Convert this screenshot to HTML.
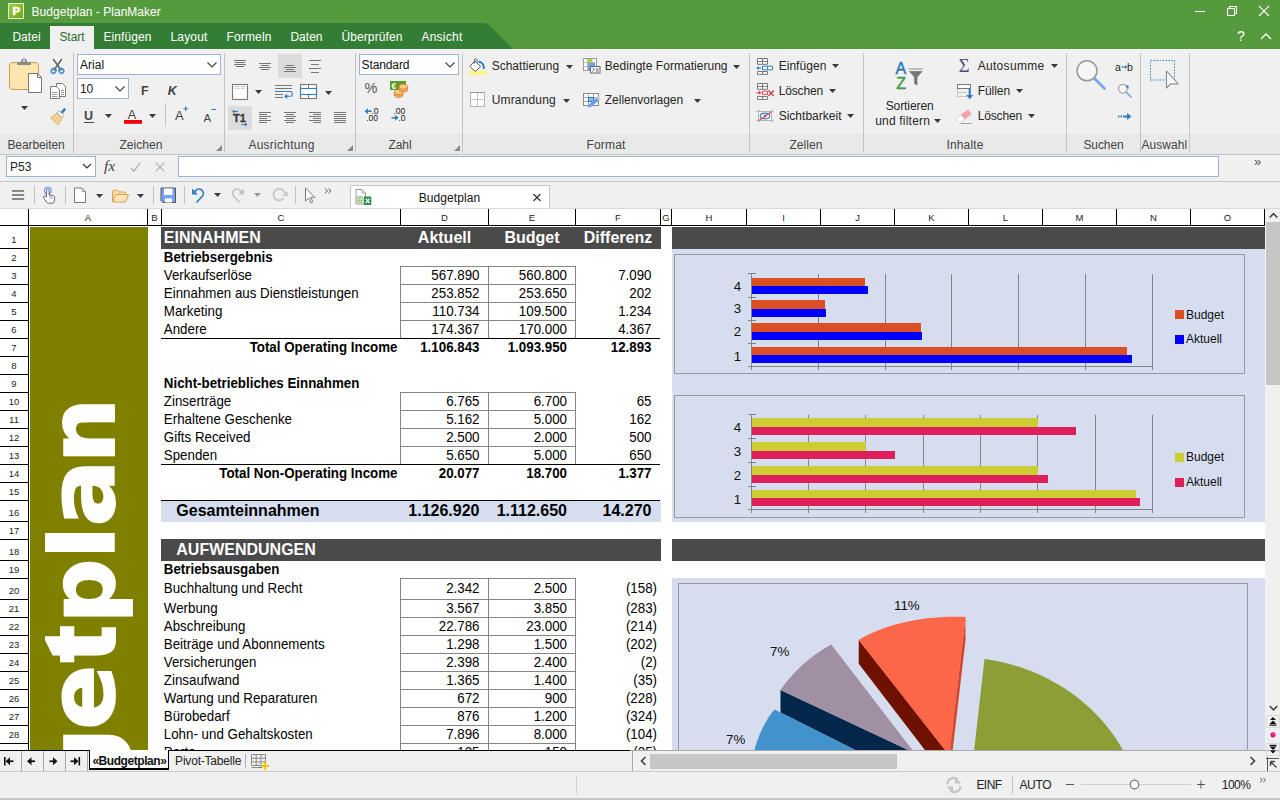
<!DOCTYPE html>
<html lang="de"><head><meta charset="utf-8"><title>Budgetplan - PlanMaker</title>
<style>
*{box-sizing:border-box;margin:0;padding:0}
html,body{width:1280px;height:800px;overflow:hidden;background:#f0f0f0}
body{font-family:"Liberation Sans",sans-serif;font-size:12px;color:#222;position:relative}
.a{position:absolute}
.t{position:absolute;white-space:nowrap;line-height:1}
#title{left:0;top:0;width:1280px;height:49px;background:#569a3e}
#ribbon{left:0;top:49px;width:1280px;height:105px;background:#f0f0f0}
#riblab{left:0;top:134px;width:1280px;height:20px;background:#e9e9e9}
.sep{position:absolute;width:1px;background:#c4c4c4;top:53px;height:100px}
.ui{position:absolute;white-space:nowrap;line-height:14px;height:14px;font-size:12px;color:#222}
.lab{position:absolute;white-space:nowrap;line-height:14px;height:14px;font-size:12px;color:#444;text-align:center}
.menu{position:absolute;white-space:nowrap;line-height:14px;font-size:12px;color:#fff;top:30px}
.combo{position:absolute;background:#fff;border:1px solid #9db3d6}
.arr{position:absolute;width:0;height:0;border-left:3.5px solid transparent;border-right:3.5px solid transparent;border-top:4px solid #333}
#sheet{left:0;top:209px;width:1265px;height:541px;background:#fff;overflow:hidden}
.ch{position:absolute;top:0;height:16px;line-height:17px;font-size:9.5px;text-align:center;color:#222;border-right:1px solid #000}
.rh{position:absolute;left:0;width:29px;border-right:1px solid #000;border-bottom:1px solid #000;font-size:9.5px;text-align:center;color:#222}
.c{position:absolute;white-space:nowrap;font-size:13.33px;line-height:15px;height:15px;color:#000}
.b{font-weight:bold}
.r{text-align:right}
.cell{position:absolute;border:1px solid #868686}
</style></head>
<body>
<div class="a" id="title"></div>
<svg class="a" style="left:0;top:23px" width="520" height="26"><path d="M0 0H483Q487.500 0 490.500 3L513 26H0Z" fill="#347d34"/></svg>
<div class="a" style="left:50px;top:26px;width:44px;height:23px;background:#f0f0f0"></div>
<div class="a" style="left:8px;top:3px;width:16px;height:16px;background:linear-gradient(135deg,#9cd33c,#6ea41d);border:1px solid #e6efc6"></div><div class="t" style="left:12.6px;top:5.5px;font-size:11.5px;font-weight:bold;color:#fff;-webkit-text-stroke:.5px #fff">P</div>
<div class="t" style="left:31.6px;top:5.5px;font-size:12px;color:#fff;letter-spacing:0.020px">Budgetplan - PlanMaker</div>
<div class="menu" style="left:12.4px;color:#fff;letter-spacing:0.037px">Datei</div>
<div class="menu" style="left:59.4px;color:#2c6e2c;letter-spacing:-0.029px">Start</div>
<div class="menu" style="left:103.4px;color:#fff;letter-spacing:0.103px">Einfügen</div>
<div class="menu" style="left:170.4px;color:#fff;letter-spacing:0.195px">Layout</div>
<div class="menu" style="left:226.4px;color:#fff;letter-spacing:0.169px">Formeln</div>
<div class="menu" style="left:290.4px;color:#fff;letter-spacing:0.034px">Daten</div>
<div class="menu" style="left:341.4px;color:#fff;letter-spacing:0.115px">Überprüfen</div>
<div class="menu" style="left:421.4px;color:#fff;letter-spacing:0.263px">Ansicht</div>
<svg class="a" style="left:1180px;top:0" width="100" height="49" fill="none" stroke="#fff" stroke-width="1.1"><path d="M15 11.5h10"/><rect x="47.5" y="8.5" width="7" height="7"/><path d="M49.5 8.5v-2h7v7h-2"/><path d="M79 6l10 10M89 6l-10 10"/><path d="M81 39l5-5l5 5" stroke-width="1.3"/></svg>
<div class="t" style="left:1237px;top:29px;font-size:14px;color:#fff">?</div>
<div class="a" id="ribbon"></div><div class="a" id="riblab"></div>
<div class="a" style="left:0;top:154px;width:1280px;height:1px;background:#c2c2c2"></div>
<div class="sep" style="left:73px"></div><div class="sep" style="left:224px"></div><div class="sep" style="left:355px"></div><div class="sep" style="left:462px"></div><div class="sep" style="left:749px"></div><div class="sep" style="left:863px"></div><div class="sep" style="left:1066px"></div><div class="sep" style="left:1140px"></div><div class="sep" style="left:1189px"></div>
<div class="lab" style="left:7.4px;top:138px;text-align:left;letter-spacing:-0.085px">Bearbeiten</div><div class="lab" style="left:119.4px;top:138px;text-align:left;letter-spacing:0.071px">Zeichen</div><div class="lab" style="left:248.4px;top:138px;text-align:left;letter-spacing:0.257px">Ausrichtung</div><div class="lab" style="left:388.4px;top:138px;text-align:left;letter-spacing:-0.036px">Zahl</div><div class="lab" style="left:586.4px;top:138px;text-align:left;letter-spacing:0.197px">Format</div><div class="lab" style="left:789.4px;top:138px;text-align:left;letter-spacing:0.085px">Zellen</div><div class="lab" style="left:946.4px;top:138px;text-align:left;letter-spacing:0.167px">Inhalte</div><div class="lab" style="left:1083.4px;top:138px;text-align:left;letter-spacing:-0.084px">Suchen</div><div class="lab" style="left:1141.4px;top:138px;text-align:left;letter-spacing:0.049px">Auswahl</div>
<div class="a" style="left:278px;top:54px;width:24px;height:24px;background:#dcdcdc"></div><div class="a" style="left:228px;top:106px;width:24px;height:24px;background:#dcdcdc"></div>
<div class="combo" style="left:77px;top:54px;width:144px;height:21px"></div><div class="combo" style="left:77px;top:78px;width:52px;height:21px"></div><div class="combo" style="left:359px;top:54px;width:100px;height:21px"></div>
<div class="ui" style="left:79.90px;top:58.00px;font-size:12px;color:#111;letter-spacing:0.037px;">Arial</div><div class="ui" style="left:79.90px;top:82.00px;font-size:12px;color:#111;letter-spacing:-0.080px;">10</div><div class="ui" style="left:361.60px;top:58.00px;font-size:12px;color:#111;letter-spacing:-0.125px;">Standard</div><div class="ui" style="left:140.90px;top:84.00px;font-size:12.5px;color:#444;letter-spacing:-0.141px;font-weight:bold;">F</div><div class="ui" style="left:167.80px;top:84.00px;font-size:12.5px;color:#444;letter-spacing:1.569px;font-weight:bold;font-style:italic;">K</div><div class="ui" style="left:84.00px;top:109.00px;font-size:12.5px;color:#444;letter-spacing:0.969px;font-weight:bold;text-decoration:underline;text-underline-offset:1.5px;">U</div><div class="ui" style="left:127.80px;top:108.00px;font-size:12.5px;color:#444;letter-spacing:2.256px;">A</div><div class="ui" style="left:174.90px;top:109.00px;font-size:13px;color:#444;letter-spacing:1.628px;">A</div><div class="ui" style="left:203.40px;top:111.00px;font-size:11.5px;color:#444;letter-spacing:1.528px;">A</div><div class="ui" style="left:364.40px;top:81.00px;font-size:14.5px;color:#555;letter-spacing:0.094px;">%</div><div class="ui" style="left:491.65px;top:59.00px;font-size:12px;color:#262626;letter-spacing:0.013px;">Schattierung</div><div class="ui" style="left:604.80px;top:59.00px;font-size:12px;color:#262626;letter-spacing:0.034px;">Bedingte Formatierung</div><div class="ui" style="left:491.65px;top:93.00px;font-size:12px;color:#262626;letter-spacing:0.172px;">Umrandung</div><div class="ui" style="left:604.80px;top:93.00px;font-size:12px;color:#262626;letter-spacing:-0.030px;">Zellenvorlagen</div><div class="ui" style="left:778.65px;top:59.00px;font-size:12px;color:#262626;letter-spacing:0.041px;">Einfügen</div><div class="ui" style="left:778.65px;top:84.00px;font-size:12px;color:#262626;letter-spacing:-0.132px;">Löschen</div><div class="ui" style="left:778.65px;top:109.00px;font-size:12px;color:#262626;letter-spacing:0.021px;">Sichtbarkeit</div><div class="ui" style="left:885.65px;top:99.00px;font-size:12px;color:#262626;letter-spacing:-0.084px;">Sortieren</div><div class="ui" style="left:875.15px;top:114.00px;font-size:12px;color:#262626;letter-spacing:0.204px;">und filtern</div><div class="ui" style="left:977.65px;top:59.00px;font-size:12px;color:#262626;letter-spacing:0.324px;">Autosumme</div><div class="ui" style="left:977.65px;top:84.00px;font-size:12px;color:#262626;letter-spacing:-0.040px;">Füllen</div><div class="ui" style="left:977.65px;top:109.00px;font-size:12px;color:#262626;letter-spacing:-0.132px;">Löschen</div><div class="ui" style="left:1114.90px;top:60.00px;font-size:10.5px;color:#262626;letter-spacing:0.856px;">a</div><div class="ui" style="left:1126.90px;top:60.00px;font-size:10.5px;color:#262626;letter-spacing:0.856px;">b</div>
<svg class="a" style="left:21.3px;top:105.8px" width="7" height="4"><path d="M0 0H7L3.5 4Z" fill="#3a3a3a"/></svg><svg class="a" style="left:105px;top:114px" width="7" height="4"><path d="M0 0H7L3.5 4Z" fill="#3a3a3a"/></svg><svg class="a" style="left:149px;top:114px" width="7" height="4"><path d="M0 0H7L3.5 4Z" fill="#3a3a3a"/></svg><svg class="a" style="left:255px;top:90.3px" width="7" height="4"><path d="M0 0H7L3.5 4Z" fill="#3a3a3a"/></svg><svg class="a" style="left:325px;top:90.5px" width="7" height="4"><path d="M0 0H7L3.5 4Z" fill="#3a3a3a"/></svg><svg class="a" style="left:566px;top:64.9px" width="7" height="4"><path d="M0 0H7L3.5 4Z" fill="#3a3a3a"/></svg><svg class="a" style="left:732.5px;top:64.9px" width="7" height="4"><path d="M0 0H7L3.5 4Z" fill="#3a3a3a"/></svg><svg class="a" style="left:563px;top:99.2px" width="7" height="4"><path d="M0 0H7L3.5 4Z" fill="#3a3a3a"/></svg><svg class="a" style="left:693.5px;top:99.2px" width="7" height="4"><path d="M0 0H7L3.5 4Z" fill="#3a3a3a"/></svg><svg class="a" style="left:832px;top:64px" width="7" height="4"><path d="M0 0H7L3.5 4Z" fill="#3a3a3a"/></svg><svg class="a" style="left:829px;top:89px" width="7" height="4"><path d="M0 0H7L3.5 4Z" fill="#3a3a3a"/></svg><svg class="a" style="left:847px;top:114px" width="7" height="4"><path d="M0 0H7L3.5 4Z" fill="#3a3a3a"/></svg><svg class="a" style="left:934px;top:119.3px" width="7" height="4"><path d="M0 0H7L3.5 4Z" fill="#3a3a3a"/></svg><svg class="a" style="left:1051px;top:64px" width="7" height="4"><path d="M0 0H7L3.5 4Z" fill="#3a3a3a"/></svg><svg class="a" style="left:1016px;top:89px" width="7" height="4"><path d="M0 0H7L3.5 4Z" fill="#3a3a3a"/></svg><svg class="a" style="left:1027.5px;top:114px" width="7" height="4"><path d="M0 0H7L3.5 4Z" fill="#3a3a3a"/></svg>
<svg class="a" style="left:0;top:49px" width="1280" height="105" viewBox="0 49 1280 105" fill="none">
<g stroke="#444" stroke-width="1.2"><path d="M207.5 62.5l4.5 4.5l4.5-4.5"/><path d="M115.5 86.5l4.5 4.5l4.5-4.5"/><path d="M445.5 62.5l4.5 4.5l4.5-4.5"/></g>
<rect x="9.5" y="62.5" width="29" height="27" rx="3.5" fill="#ffe5b0" stroke="#d39a52"/><path d="M17 65v-1.5a1.5 1.5 0 0 1 1.5-1.5h3a2.6 2.6 0 0 1 5 0h3a1.5 1.5 0 0 1 1.5 1.5v1.5z" fill="#8a8a8a"/><circle cx="24" cy="61.300" r="2.900" fill="#8a8a8a"/><circle cx="24" cy="60.700" r="1.100" fill="#f0f0f0"/><path d="M28.5 73.5h9l4 4v15h-13z" fill="#fff" stroke="#777"/><path d="M37.5 73.5v4h4" stroke="#777"/>
<g stroke="#666" stroke-width="1.6" stroke-linecap="round"><path d="M53.5 59.5l7.5 10.5"/><path d="M61.5 59.5l-7.500 10.500"/></g><g stroke="#3c87c5" stroke-width="1.5"><ellipse cx="53.6" cy="70.8" rx="2.2" ry="2.6" transform="rotate(35 53.6 70.8)"/><ellipse cx="61.4" cy="70.8" rx="2.2" ry="2.6" transform="rotate(-35 61.4 70.8)"/></g>
<g stroke="#777" fill="#fff"><path d="M56.500 83.500h6l3 3v10h-9z"/><path d="M50.500 86.500h6l3 3v9h-9z"/></g><g stroke="#999"><path d="M52 92.500h5.500M52 94.500h5.500M52 96.500h5.500M61 90.500h3M61 92.500h3M61 94.500h3"/></g>
<g transform="translate(1.2 .8) rotate(40 57 116)"><rect x="55.8" y="105" width="2.6" height="6.500" rx="1" fill="#3b7fb5"/><rect x="53.5" y="111" width="7.200" height="3" fill="#fff" stroke="#999" stroke-width=".8"/><path d="M53.300 114.500h7.600l1.200 7.600h-10z" fill="#f6d79a" stroke="#d9a85c" stroke-width=".8"/><path d="M54.500 116v5M57 116v5.500M59.500 116v5" stroke="#e6bd7a" stroke-width=".6"/></g>
<rect x="165" y="103" width="1" height="23" fill="#c4c4c4"/><rect x="124" y="120" width="18" height="3.800" fill="#f00000"/><g stroke="#2f7fc1" stroke-width="1.1"><path d="M183.500 108.700h4.400M185.700 106.500v4.400"/><path d="M211.500 109.500h4.400"/></g>
<path d="M222 145v6h-6z" fill="#8a8a8a"/><path d="M353 145v6h-6z" fill="#8a8a8a"/><path d="M460 145v6h-6z" fill="#8a8a8a"/>
<rect x="234" y="60" width="12" height="1" fill="#777"/><rect x="235" y="62" width="10" height="1" fill="#777"/><rect x="234" y="64" width="12" height="1" fill="#777"/><rect x="236" y="66" width="8" height="1" fill="#777"/><rect x="259" y="63" width="12" height="1" fill="#777"/><rect x="261" y="65" width="8" height="1" fill="#777"/><rect x="259" y="67" width="12" height="1" fill="#777"/><rect x="261" y="69" width="8" height="1" fill="#777"/><rect x="286" y="65" width="8" height="1" fill="#777"/><rect x="284" y="67" width="12" height="1" fill="#777"/><rect x="286" y="69" width="8" height="1" fill="#777"/><rect x="284" y="71" width="12" height="1" fill="#777"/><rect x="309" y="60" width="12" height="1" fill="#777"/><rect x="311" y="64" width="8" height="1" fill="#777"/><rect x="309" y="68" width="12" height="1" fill="#777"/><rect x="311" y="72" width="8" height="1" fill="#777"/><rect x="259" y="112" width="12" height="1" fill="#777"/><rect x="284" y="112" width="12" height="1" fill="#777"/><rect x="309" y="112" width="12" height="1" fill="#777"/><rect x="334" y="112" width="12" height="1" fill="#777"/><rect x="259" y="114" width="8" height="1" fill="#777"/><rect x="286" y="114" width="8" height="1" fill="#777"/><rect x="313" y="114" width="8" height="1" fill="#777"/><rect x="334" y="114" width="12" height="1" fill="#777"/><rect x="259" y="116" width="12" height="1" fill="#777"/><rect x="284" y="116" width="12" height="1" fill="#777"/><rect x="309" y="116" width="12" height="1" fill="#777"/><rect x="334" y="116" width="12" height="1" fill="#777"/><rect x="259" y="118" width="8" height="1" fill="#777"/><rect x="286" y="118" width="8" height="1" fill="#777"/><rect x="313" y="118" width="8" height="1" fill="#777"/><rect x="334" y="118" width="12" height="1" fill="#777"/><rect x="259" y="120" width="12" height="1" fill="#777"/><rect x="284" y="120" width="12" height="1" fill="#777"/><rect x="309" y="120" width="12" height="1" fill="#777"/><rect x="334" y="120" width="12" height="1" fill="#777"/><rect x="259" y="122" width="8" height="1" fill="#777"/><rect x="286" y="122" width="8" height="1" fill="#777"/><rect x="313" y="122" width="8" height="1" fill="#777"/><rect x="334" y="122" width="12" height="1" fill="#777"/><rect x="232.500" y="84.500" width="15" height="15" fill="#fff" stroke="#777" stroke-width="1.100"/><path d="M234.500 86.500h5M241 86.500h4.500M234.500 88.500h2M237.500 88.500h2M241 88.500h3.500" stroke="#c8c8c8"/>
<g stroke="#777"><path d="M275 85.500h17M275 88.500h17M275 94.500h8M275 97.500h8"/></g><path d="M275 91.500h15.500a1.800 1.800 0 0 1 1.800 1.800v1.200a1.800 1.800 0 0 1-1.800 1.800h-4" stroke="#2f7fc1" stroke-width="1.100"/><path d="M284 96.300l3.200-2.600v5.200z" fill="#2f7fc1"/>
<rect x="300.500" y="84.500" width="16" height="14" fill="#fff" stroke="#777" stroke-width="1.100"/><path d="M308.500 84.500v14" stroke="#777"/><rect x="300.500" y="88.500" width="16" height="6" fill="#fff" stroke="#2f7fc1" stroke-width="1.100"/>
<g stroke="#2f7fc1" stroke-width="1.100"><path d="M233 111.500h5"/><path d="M241.500 124.500h5"/></g><path d="M232 111.500l2.500-2v4z" fill="#2f7fc1"/><path d="M247.500 124.500l-2.500-2v4z" fill="#2f7fc1"/>
<rect x="390" y="81" width="16" height="9" fill="#5a9c2a"/><ellipse cx="398.6" cy="95" rx="4.300" ry="2.400" fill="#f8c987" stroke="#d8802a" stroke-width=".9"/><ellipse cx="398.6" cy="93.5" rx="4.300" ry="2.400" fill="#f8c987" stroke="#d8802a" stroke-width=".9"/><ellipse cx="398.6" cy="92" rx="4.300" ry="2.400" fill="#f8c987" stroke="#d8802a" stroke-width=".9"/><ellipse cx="403.4" cy="89.6" rx="4.300" ry="2.400" fill="#f8c987" stroke="#d8802a" stroke-width=".9"/><ellipse cx="403.4" cy="88.1" rx="4.300" ry="2.400" fill="#f8c987" stroke="#d8802a" stroke-width=".9"/><ellipse cx="403.4" cy="86.6" rx="4.300" ry="2.400" fill="#f8c987" stroke="#d8802a" stroke-width=".9"/><g stroke="#2f7fc1" stroke-width="1.600"><path d="M366 111.200h5.500"/><path d="M391.500 117.800h5.500"/></g><path d="M364.500 111.200l3.500-3v6z" fill="#2f7fc1"/><path d="M398.600 117.800l-3.500-3v6z" fill="#2f7fc1"/>
<rect x="469" y="71" width="18" height="3.800" fill="#fff580"/><path d="M475 61l5.500 5.500l-4.500 4.500a1 1 0 0 1-1.400 0l-4.100-4.100a1 1 0 0 1 0-1.400z" fill="#fff" stroke="#555"/><path d="M474.300 63.800v-3.600a1.400 1.400 0 0 1 2.800 0v2" stroke="#555" stroke-width=".9"/><path d="M478.500 61.800c3.800.3 5.800 3.200 5.300 7.200" stroke="#2f7fc1" stroke-width="2"/>
<rect x="583.500" y="58.500" width="13" height="12" fill="#fff" stroke="#999"/><path d="M587.500 58.500v12M592 58.500v12M583.500 62.500h13M583.500 66.500h13" stroke="#bbb"/><rect x="588" y="59" width="4" height="3.500" fill="#b5d334"/><rect x="588" y="63" width="7" height="3.500" fill="#6d9eeb"/><rect x="588" y="67" width="3" height="3.500" fill="#6d9eeb"/><rect x="590.500" y="66.500" width="9.500" height="6.500" fill="#fff" stroke="#666"/><path d="M592.500 68l2 1.700l-2 1.700M596 69h2.500M596 71h2.500" stroke="#444" stroke-width=".9"/>
<rect x="470.500" y="92.500" width="14" height="14" fill="#fff" stroke="#b4b4b4"/><path d="M477.500 92.500v14M470.500 99.500h14" stroke="#c4c4c4"/><path d="M470 92.500h15" stroke="#999"/>
<rect x="583.500" y="93.500" width="15" height="12" fill="#fff" stroke="#888"/><path d="M588.500 93.500v12M593.500 93.500v12M583.500 97.500h15M583.500 101.500h15" stroke="#aaa"/><rect x="588.500" y="97.500" width="5" height="4" fill="#9db7f0" stroke="#2f7fc1"/><path d="M587.500 108l2-4l7-6.500l2.500 2.500l-7 6.500z" fill="#6d9eeb"/><path d="M596 98l2-2l2.500 2.500l-2 2z" fill="#ccc"/>
<path d="M757.500 58.5h10v5.8h-10zM762.500 58.5v5.8M757.500 61.4h10" stroke="#777" fill="#fff" stroke-width="1"/><path d="M757.500 71.5h10v2.9h-10zM762.500 71.5v2.9" stroke="#777" fill="#fff" stroke-width="1"/><path d="M762.500 66.200h10v3.600h-10zM767.500 66.200v3.600" fill="#fff" stroke="#2f7fc1"/><path d="M758 68h3.500" stroke="#2f7fc1"/><path d="M756.200 68l2.600-2v4z" fill="#2f7fc1"/>
<path d="M757.500 83.5h10v5.8h-10zM762.500 83.5v5.8M757.500 86.4h10" stroke="#777" fill="#fff" stroke-width="1"/><path d="M757.500 96.5h10v2.9h-10zM762.500 96.5v2.9" stroke="#777" fill="#fff" stroke-width="1"/><path d="M756.500 92.800h3" stroke="#d9333f"/><path d="M761.500 92.800l-2.600-2v4z" fill="#d9333f"/><path d="M762.500 91.200h5v3.200h-5z" fill="#fff" stroke="#d9333f" stroke-width=".9"/><path d="M768.500 90.500l5.300 5.500M773.800 90.500l-5.300 5.500" stroke="#d9333f" stroke-width="1.200"/>
<rect x="758.500" y="111.500" width="13" height="9" fill="#fff" stroke="none"/><path d="M756.500 111.500h17M756.500 120.500h17M758.500 109.500v13M771.500 109.500v13" stroke="#b4b4b4"/><ellipse cx="765" cy="116" rx="4.800" ry="2.900" stroke="#3b7fb5" stroke-width="1.100"/><circle cx="765" cy="116" r="1.400" fill="#3b7fb5"/><path d="M759 120.500l12-8.500" stroke="#e0404a" stroke-width="1.100"/>
<path d="M908.500 69h14.500M909.500 71.500h12.500l-5 5.500v8l-2.500-1.500v-6.500z" fill="#777" stroke="#777" stroke-width=".8"/>
<path d="M957.500 92.500h9.500M957.500 96.500h9.500M957.500 88.500v8M970.500 88.500v1" stroke="#c9c9c9"/><rect x="957.500" y="84.500" width="13" height="4" fill="#fff" stroke="#777"/><path d="M969.700 89v7" stroke="#2f7fc1" stroke-width="2.200"/><path d="M966 95h7.400l-3.700 4.200z" fill="#2f7fc1"/>
<g transform="rotate(-37 963.700 116.300)"><rect x="956" y="113.300" width="15.500" height="6.200" rx="1.200" fill="#f5a3aa" stroke="#d9d9d9" stroke-width=".7"/><path d="M957.200 113.300h5.300v6.200h-5.300a1.200 1.200 0 0 1-1.200-1.200v-3.800a1.200 1.200 0 0 1 1.200-1.200z" fill="#fff" stroke="#cfcfcf" stroke-width=".7"/></g><path d="M960.500 123.500h11" stroke="#a0a0a0"/>
<path d="M1094.500 78.500l10 10" stroke="#7aa0f0" stroke-width="2.600" stroke-linecap="round"/><circle cx="1087" cy="70.800" r="10" fill="#f6f6f6" stroke="#9a9a9a" stroke-width="1.500"/><path d="M1121.500 67h4.500" stroke="#2f7fc1" stroke-width="1.100"/><path d="M1127.500 67l-2.500-2v4z" fill="#2f7fc1"/><path d="M1126 92l5 5" stroke="#7aa0f0" stroke-width="1.600" stroke-linecap="round"/><circle cx="1122.800" cy="88.800" r="4.300" fill="#f6f6f6" stroke="#999" stroke-width="1.100"/><path d="M1125 85.500l3.500 3.500v-3.500z" fill="#2f7fc1"/><path d="M1118 116.500h1.500M1120.500 116.500h1.500M1123 116.500h4.500" stroke="#2f7fc1" stroke-width="2"/><path d="M1131.500 116.500l-4.500-3.500v7z" fill="#2f7fc1"/>
<rect x="1150.500" y="60.500" width="24" height="19.500" stroke="#2f7fc1" stroke-dasharray="1.500 1.500" fill="none"/><path d="M1166.500 71v17l4-4.200l7.800.2z" fill="#fff" stroke="#888" stroke-width="1.100" stroke-linejoin="round"/>
</svg>
<svg class="a" style="left:0;top:49px" width="1280" height="105" viewBox="0 49 1280 105" font-family="Liberation Sans,sans-serif"><text x="391.500" y="88.700" font-size="8.500" font-weight="bold" fill="#fff">€</text><g font-size="8.500" fill="#1a1a1a"><text x="371.500" y="113.700">.0</text><text x="366.200" y="120.700">.00</text><text x="393.300" y="113.700">.00</text><text x="398.400" y="120.700">.0</text></g><text x="233" y="121.700" font-size="11" font-weight="700" fill="#3c3c3c" stroke="#3c3c3c" stroke-width=".35">T1</text><text x="895.600" y="73.600" font-size="16" fill="#2e75b6" stroke="#2e75b6" stroke-width=".45">A</text><text x="896.200" y="88.800" font-size="16" fill="#3d9a45" stroke="#3d9a45" stroke-width=".45">Z</text><text x="958.800" y="71.700" font-size="18.500" font-family="Liberation Serif,serif" fill="#524a7a">Σ</text></svg>

<div class="combo" style="left:6px;top:156px;width:90px;height:21px"></div><div class="ui" style="left:10px;top:160px">P53</div>
<svg class="a" style="left:82px;top:163px" width="10" height="7" fill="none" stroke="#333" stroke-width="1.2"><path d="M1 1l4 4l4-4"/></svg>
<div class="t" style="left:104px;top:158px;font-family:'Liberation Serif',serif;font-style:italic;font-size:15.5px;color:#444">fx</div>
<svg class="a" style="left:128px;top:160px" width="40" height="14" fill="none" stroke="#b8b8b8" stroke-width="1.5"><path d="M3 8l3 3l6-8"/><path d="M28 3l8 8M36 3l-8 8" stroke-width="1.2"/></svg>
<div class="combo" style="left:178px;top:156px;width:1041px;height:21px"></div>
<div class="t" style="left:1254px;top:155px;font-size:13px;color:#555">»</div>
<div class="a" style="left:0;top:181px;width:1280px;height:1px;background:#c6c6c6"></div>
<svg class="a" style="left:0;top:182px" width="560" height="27" viewBox="0 182 560 27" fill="none">
<path d="M12 191h12.200M12 195h12.200M12 199h12.200" stroke="#666" stroke-width="1.700"/><rect x="34" y="186" width="1" height="18" fill="#c2c2c2"/><rect x="65" y="186" width="1" height="18" fill="#c2c2c2"/><rect x="153" y="186" width="1" height="18" fill="#c2c2c2"/><rect x="184" y="186" width="1" height="18" fill="#c2c2c2"/><rect x="295" y="186" width="1" height="18" fill="#c2c2c2"/><circle cx="47.800" cy="190.800" r="3.300" stroke="#7aa0f0" stroke-width="1.300"/><path d="M46.500 197v-6.300a1.300 1.300 0 0 1 2.600 0v4.300l4.300.8a1.800 1.800 0 0 1 1.400 2l-.6 3.700a2 2 0 0 1-2 1.700h-3.700a2 2 0 0 1-1.600-.8l-3.400-4.600a1.200 1.200 0 0 1 1.800-1.500z" fill="#fff" stroke="#666" stroke-width="1"/><path d="M50 196v3M52 196.500v2.500" stroke="#888" stroke-width=".8"/>
<path d="M74.500 188h7.500l3.500 3.500v11h-11z" fill="#fff" stroke="#777"/><path d="M82 188v3.500h3.500" stroke="#999"/><path d="M112.500 201.500v-10.200a1 1 0 0 1 1-1h4l1.500 1.700h5.500a1 1 0 0 1 1 1v2" fill="#ffe0a8" stroke="#d9a050"/><path d="M112.500 202l3-7.500h13l-3 7.500z" fill="#ffe6b8" stroke="#d9a050" stroke-linejoin="round"/>
<path d="M96 194h7l-3.500 4z" fill="#3a3a3a"/><path d="M137 194h7l-3.500 4z" fill="#3a3a3a"/><path d="M214 193h7l-3.500 4z" fill="#3a3a3a"/><path d="M254 193h7l-3.500 4z" fill="#9a9a9a"/><path d="M161 188h14.500v14.500h-12.500l-2-2z" fill="#7aa0f0" stroke="#555" stroke-width="1"/><rect x="164" y="188.500" width="8.500" height="6.500" fill="#fff"/><rect x="165" y="198.500" width="7" height="4" fill="#fff"/>
<path d="M196.500 202.500l6-6.500a4.300 4.300 0 0 0-6.500-5.600l-1.500 1.500" stroke="#2f7fc1" stroke-width="1.700"/><path d="M192 188.500v6h6z" fill="#2f7fc1"/><path d="M239.500 202.500l-6-6.500a4.300 4.300 0 0 1 6.500-5.600l1.500 1.500" stroke="#c2c2c2" stroke-width="1.700"/><path d="M244 188.500v6h-6z" fill="#c2c2c2"/><path d="M283.500 198.500a5.800 5.800 0 1 1 1.300-5.500" stroke="#c4c4c4" stroke-width="1.700"/><path d="M287.500 191v5h-5.500z" fill="#c4c4c4"/>
<path d="M305.500 188v13l3.200-3l2.200 4.800l1.900-.9l-2.200-4.600h4.200z" fill="#fff" stroke="#777" stroke-width="1" stroke-linejoin="round"/><path d="M325 188.500l2.500 2.300l-2.500 2.300M328.500 188.500l2.500 2.300l-2.500 2.300" stroke="#555" stroke-width="1"/>
<path d="M350.500 208.500v-23h199v23" fill="#fff" stroke="#c6c6c6"/><path d="M356 189.500h6l3.500 3.500v11h-9.500z" fill="#fff" stroke="#999"/><path d="M362 189.500v3.500h3.500" stroke="#aaa"/><path d="M357.500 196.500h5.500v6h-5.500zM359.300 196.500v6M361.100 196.500v6M357.500 198.500h5.500M357.500 200.500h5.500" stroke="#7dbb6e" stroke-width=".7"/><rect x="364" y="196.500" width="7.300" height="8.500" fill="#2f8f4a"/><path d="M365.800 198.700l3.700 4.300M369.500 198.700l-3.700 4.300" stroke="#fff" stroke-width="1.200"/><path d="M533.500 194l7 7M540.500 194l-7 7" stroke="#333" stroke-width="1.200"/>
</svg>
<div class="ui" style="left:418.800px;top:191px;color:#111;letter-spacing:0.067px">Budgetplan</div>

<div class="a" style="left:0;top:208px;width:1280px;height:1px;background:#d8d8d8"></div>
<div class="a" id="sheet">
<div class="ch" style="left:0px;width:29px"></div><div class="ch" style="left:29px;width:119px">A</div><div class="ch" style="left:148px;width:14px">B</div><div class="ch" style="left:162px;width:239px">C</div><div class="ch" style="left:401px;width:88px">D</div><div class="ch" style="left:489px;width:87px">E</div><div class="ch" style="left:576px;width:85px">F</div><div class="ch" style="left:661px;width:11px">G</div><div class="ch" style="left:672px;width:75px">H</div><div class="ch" style="left:747px;width:74px">I</div><div class="ch" style="left:821px;width:74px">J</div><div class="ch" style="left:895px;width:74px">K</div><div class="ch" style="left:969px;width:74px">L</div><div class="ch" style="left:1043px;width:74px">M</div><div class="ch" style="left:1117px;width:74px">N</div><div class="ch" style="left:1191px;width:74px">O</div>
<div class="a" style="left:0;top:16px;width:1265px;height:1px;background:#000"></div>
<div class="rh" style="top:17px;height:23px;line-height:28px">1</div><div class="rh" style="top:40px;height:18px;line-height:18px">2</div><div class="rh" style="top:58px;height:18px;line-height:18px">3</div><div class="rh" style="top:76px;height:18px;line-height:18px">4</div><div class="rh" style="top:94px;height:18px;line-height:18px">5</div><div class="rh" style="top:112px;height:18px;line-height:18px">6</div><div class="rh" style="top:130px;height:18px;line-height:18px">7</div><div class="rh" style="top:148px;height:18px;line-height:18px">8</div><div class="rh" style="top:166px;height:18px;line-height:18px">9</div><div class="rh" style="top:184px;height:18px;line-height:18px">10</div><div class="rh" style="top:202px;height:18px;line-height:18px">11</div><div class="rh" style="top:220px;height:18px;line-height:18px">12</div><div class="rh" style="top:238px;height:18px;line-height:18px">13</div><div class="rh" style="top:256px;height:18px;line-height:18px">14</div><div class="rh" style="top:274px;height:18px;line-height:18px">15</div><div class="rh" style="top:292px;height:21px;line-height:24px">16</div><div class="rh" style="top:313px;height:18px;line-height:18px">17</div><div class="rh" style="top:331px;height:21px;line-height:24px">18</div><div class="rh" style="top:352px;height:18px;line-height:18px">19</div><div class="rh" style="top:370px;height:21px;line-height:24px">20</div><div class="rh" style="top:391px;height:18px;line-height:18px">21</div><div class="rh" style="top:409px;height:18px;line-height:18px">22</div><div class="rh" style="top:427px;height:18px;line-height:18px">23</div><div class="rh" style="top:445px;height:18px;line-height:18px">24</div><div class="rh" style="top:463px;height:18px;line-height:18px">25</div><div class="rh" style="top:481px;height:18px;line-height:18px">26</div><div class="rh" style="top:499px;height:18px;line-height:18px">27</div><div class="rh" style="top:517px;height:18px;line-height:18px">28</div><div class="rh" style="top:535px;height:18px;line-height:18px">29</div>
<div class="a" style="left:30px;top:18px;width:118px;height:534px;background:#808000"></div><svg class="a" style="left:0;top:0" width="160" height="541" viewBox="0 209 160 541" font-family="DejaVu Sans,sans-serif" font-weight="bold" font-size="100" fill="#fff" stroke="#fff" stroke-width="2"><text transform="translate(114.00 462.99) rotate(-90) scale(0.9123 0.9000)">n</text><text transform="translate(114.19 526.58) rotate(-90) scale(0.9948 0.9050)">a</text><text transform="translate(113.50 559.33) rotate(-90) scale(0.9750 0.8962)">l</text><text transform="translate(113.23 623.31) rotate(-90) scale(0.9016 0.8987)">p</text><text transform="translate(114.77 662.50) rotate(-90) scale(0.7819 0.9840)">t</text><text transform="translate(114.20 729.87) rotate(-90) scale(0.9574 0.9000)">e</text><text transform="translate(112.94 794.80) rotate(-90) scale(0.9344 0.8938)">g</text><path d="M45 636.300H99Q104 636.300 106 633V642H45Z" fill="#fff" stroke="none"/><path d="M43 636L53.600 657.500H43Z" fill="#808000" stroke="none"/></svg>
<div class="a" style="left:161px;top:18px;width:500px;height:22px;background:#4a4a4a"></div><div class="a" style="left:672px;top:18px;width:593px;height:22px;background:#4a4a4a"></div><div class="a" style="left:161px;top:330px;width:500px;height:22px;background:#4a4a4a"></div><div class="a" style="left:672px;top:330px;width:593px;height:22px;background:#4a4a4a"></div><div class="a" style="left:161px;top:292px;width:500px;height:21px;background:#d5ddef"></div><div class="a" style="left:672px;top:40px;width:593px;height:273px;background:#d5ddef"></div><div class="a" style="left:672px;top:369px;width:593px;height:183px;background:#d5ddef"></div><div class="a" style="left:161px;top:129px;width:499px;height:1px;background:#000"></div><div class="a" style="left:161px;top:255px;width:499px;height:1px;background:#000"></div><div class="a" style="left:161px;top:291px;width:499px;height:1px;background:#000"></div><div class="cell" style="left:400px;top:57px;width:89px;height:19px"></div><div class="cell" style="left:488px;top:57px;width:88px;height:19px"></div><div class="cell" style="left:400px;top:75px;width:89px;height:19px"></div><div class="cell" style="left:488px;top:75px;width:88px;height:19px"></div><div class="cell" style="left:400px;top:93px;width:89px;height:19px"></div><div class="cell" style="left:488px;top:93px;width:88px;height:19px"></div><div class="cell" style="left:400px;top:111px;width:89px;height:19px"></div><div class="cell" style="left:488px;top:111px;width:88px;height:19px"></div><div class="cell" style="left:400px;top:183px;width:89px;height:19px"></div><div class="cell" style="left:488px;top:183px;width:88px;height:19px"></div><div class="cell" style="left:400px;top:201px;width:89px;height:19px"></div><div class="cell" style="left:488px;top:201px;width:88px;height:19px"></div><div class="cell" style="left:400px;top:219px;width:89px;height:19px"></div><div class="cell" style="left:488px;top:219px;width:88px;height:19px"></div><div class="cell" style="left:400px;top:237px;width:89px;height:19px"></div><div class="cell" style="left:488px;top:237px;width:88px;height:19px"></div><div class="cell" style="left:400px;top:369px;width:89px;height:22px"></div><div class="cell" style="left:488px;top:369px;width:88px;height:22px"></div><div class="cell" style="left:400px;top:390px;width:89px;height:19px"></div><div class="cell" style="left:488px;top:390px;width:88px;height:19px"></div><div class="cell" style="left:400px;top:408px;width:89px;height:19px"></div><div class="cell" style="left:488px;top:408px;width:88px;height:19px"></div><div class="cell" style="left:400px;top:426px;width:89px;height:19px"></div><div class="cell" style="left:488px;top:426px;width:88px;height:19px"></div><div class="cell" style="left:400px;top:444px;width:89px;height:19px"></div><div class="cell" style="left:488px;top:444px;width:88px;height:19px"></div><div class="cell" style="left:400px;top:462px;width:89px;height:19px"></div><div class="cell" style="left:488px;top:462px;width:88px;height:19px"></div><div class="cell" style="left:400px;top:480px;width:89px;height:19px"></div><div class="cell" style="left:488px;top:480px;width:88px;height:19px"></div><div class="cell" style="left:400px;top:498px;width:89px;height:19px"></div><div class="cell" style="left:488px;top:498px;width:88px;height:19px"></div><div class="cell" style="left:400px;top:516px;width:89px;height:19px"></div><div class="cell" style="left:488px;top:516px;width:88px;height:19px"></div><div class="cell" style="left:400px;top:534px;width:89px;height:19px"></div><div class="cell" style="left:488px;top:534px;width:88px;height:19px"></div><div class="a" style="left:161px;top:129px;width:499px;height:1px;background:#000"></div><div class="a" style="left:161px;top:255px;width:499px;height:1px;background:#000"></div>
<div class="c" style="top:20.00px;font-size:16px;line-height:18px;height:18px;font-weight:bold;color:#fff;left:163.80px;">EINNAHMEN</div><div class="c" style="top:20.00px;font-size:16px;line-height:18px;height:18px;font-weight:bold;color:#fff;left:294.50px;width:300px;text-align:center;">Aktuell</div><div class="c" style="top:20.00px;font-size:16px;line-height:18px;height:18px;font-weight:bold;color:#fff;left:382.00px;width:300px;text-align:center;">Budget</div><div class="c" style="top:20.00px;font-size:16px;line-height:18px;height:18px;font-weight:bold;color:#fff;left:468.00px;width:300px;text-align:center;">Differenz</div><div class="c" style="top:41.00px;font-size:13.33px;line-height:15px;height:15px;transform:scaleY(1.08);transform-origin:0 12px;font-weight:bold;left:163.80px;">Betriebsergebnis</div><div class="c" style="top:59.00px;font-size:13.33px;line-height:15px;height:15px;transform:scaleY(1.08);transform-origin:0 12px;left:163.80px;">Verkaufserlöse</div><div class="c" style="top:59.00px;font-size:13.33px;line-height:15px;height:15px;transform:scaleY(1.08);transform-origin:0 12px;left:179.50px;width:300px;text-align:right;">567.890</div><div class="c" style="top:59.00px;font-size:13.33px;line-height:15px;height:15px;transform:scaleY(1.08);transform-origin:0 12px;left:267.00px;width:300px;text-align:right;">560.800</div><div class="c" style="top:59.00px;font-size:13.33px;line-height:15px;height:15px;transform:scaleY(1.08);transform-origin:0 12px;left:351.50px;width:300px;text-align:right;">7.090</div><div class="c" style="top:77.00px;font-size:13.33px;line-height:15px;height:15px;transform:scaleY(1.08);transform-origin:0 12px;left:163.80px;">Einnahmen aus Dienstleistungen</div><div class="c" style="top:77.00px;font-size:13.33px;line-height:15px;height:15px;transform:scaleY(1.08);transform-origin:0 12px;left:179.50px;width:300px;text-align:right;">253.852</div><div class="c" style="top:77.00px;font-size:13.33px;line-height:15px;height:15px;transform:scaleY(1.08);transform-origin:0 12px;left:267.00px;width:300px;text-align:right;">253.650</div><div class="c" style="top:77.00px;font-size:13.33px;line-height:15px;height:15px;transform:scaleY(1.08);transform-origin:0 12px;left:351.50px;width:300px;text-align:right;">202</div><div class="c" style="top:95.00px;font-size:13.33px;line-height:15px;height:15px;transform:scaleY(1.08);transform-origin:0 12px;left:163.80px;">Marketing</div><div class="c" style="top:95.00px;font-size:13.33px;line-height:15px;height:15px;transform:scaleY(1.08);transform-origin:0 12px;left:179.50px;width:300px;text-align:right;">110.734</div><div class="c" style="top:95.00px;font-size:13.33px;line-height:15px;height:15px;transform:scaleY(1.08);transform-origin:0 12px;left:267.00px;width:300px;text-align:right;">109.500</div><div class="c" style="top:95.00px;font-size:13.33px;line-height:15px;height:15px;transform:scaleY(1.08);transform-origin:0 12px;left:351.50px;width:300px;text-align:right;">1.234</div><div class="c" style="top:113.00px;font-size:13.33px;line-height:15px;height:15px;transform:scaleY(1.08);transform-origin:0 12px;left:163.80px;">Andere</div><div class="c" style="top:113.00px;font-size:13.33px;line-height:15px;height:15px;transform:scaleY(1.08);transform-origin:0 12px;left:179.50px;width:300px;text-align:right;">174.367</div><div class="c" style="top:113.00px;font-size:13.33px;line-height:15px;height:15px;transform:scaleY(1.08);transform-origin:0 12px;left:267.00px;width:300px;text-align:right;">170.000</div><div class="c" style="top:113.00px;font-size:13.33px;line-height:15px;height:15px;transform:scaleY(1.08);transform-origin:0 12px;left:351.50px;width:300px;text-align:right;">4.367</div><div class="c" style="top:131.00px;font-size:13.33px;line-height:15px;height:15px;transform:scaleY(1.08);transform-origin:0 12px;font-weight:bold;left:97.50px;width:300px;text-align:right;">Total Operating Income</div><div class="c" style="top:131.00px;font-size:13.33px;line-height:15px;height:15px;transform:scaleY(1.08);transform-origin:0 12px;font-weight:bold;left:179.50px;width:300px;text-align:right;">1.106.843</div><div class="c" style="top:131.00px;font-size:13.33px;line-height:15px;height:15px;transform:scaleY(1.08);transform-origin:0 12px;font-weight:bold;left:267.00px;width:300px;text-align:right;">1.093.950</div><div class="c" style="top:131.00px;font-size:13.33px;line-height:15px;height:15px;transform:scaleY(1.08);transform-origin:0 12px;font-weight:bold;left:351.50px;width:300px;text-align:right;">12.893</div><div class="c" style="top:167.00px;font-size:13.33px;line-height:15px;height:15px;transform:scaleY(1.08);transform-origin:0 12px;font-weight:bold;left:163.80px;">Nicht-betriebliches Einnahmen</div><div class="c" style="top:185.00px;font-size:13.33px;line-height:15px;height:15px;transform:scaleY(1.08);transform-origin:0 12px;left:163.80px;">Zinserträge</div><div class="c" style="top:185.00px;font-size:13.33px;line-height:15px;height:15px;transform:scaleY(1.08);transform-origin:0 12px;left:179.50px;width:300px;text-align:right;">6.765</div><div class="c" style="top:185.00px;font-size:13.33px;line-height:15px;height:15px;transform:scaleY(1.08);transform-origin:0 12px;left:267.00px;width:300px;text-align:right;">6.700</div><div class="c" style="top:185.00px;font-size:13.33px;line-height:15px;height:15px;transform:scaleY(1.08);transform-origin:0 12px;left:351.50px;width:300px;text-align:right;">65</div><div class="c" style="top:203.00px;font-size:13.33px;line-height:15px;height:15px;transform:scaleY(1.08);transform-origin:0 12px;left:163.80px;">Erhaltene Geschenke</div><div class="c" style="top:203.00px;font-size:13.33px;line-height:15px;height:15px;transform:scaleY(1.08);transform-origin:0 12px;left:179.50px;width:300px;text-align:right;">5.162</div><div class="c" style="top:203.00px;font-size:13.33px;line-height:15px;height:15px;transform:scaleY(1.08);transform-origin:0 12px;left:267.00px;width:300px;text-align:right;">5.000</div><div class="c" style="top:203.00px;font-size:13.33px;line-height:15px;height:15px;transform:scaleY(1.08);transform-origin:0 12px;left:351.50px;width:300px;text-align:right;">162</div><div class="c" style="top:221.00px;font-size:13.33px;line-height:15px;height:15px;transform:scaleY(1.08);transform-origin:0 12px;left:163.80px;">Gifts Received</div><div class="c" style="top:221.00px;font-size:13.33px;line-height:15px;height:15px;transform:scaleY(1.08);transform-origin:0 12px;left:179.50px;width:300px;text-align:right;">2.500</div><div class="c" style="top:221.00px;font-size:13.33px;line-height:15px;height:15px;transform:scaleY(1.08);transform-origin:0 12px;left:267.00px;width:300px;text-align:right;">2.000</div><div class="c" style="top:221.00px;font-size:13.33px;line-height:15px;height:15px;transform:scaleY(1.08);transform-origin:0 12px;left:351.50px;width:300px;text-align:right;">500</div><div class="c" style="top:239.00px;font-size:13.33px;line-height:15px;height:15px;transform:scaleY(1.08);transform-origin:0 12px;left:163.80px;">Spenden</div><div class="c" style="top:239.00px;font-size:13.33px;line-height:15px;height:15px;transform:scaleY(1.08);transform-origin:0 12px;left:179.50px;width:300px;text-align:right;">5.650</div><div class="c" style="top:239.00px;font-size:13.33px;line-height:15px;height:15px;transform:scaleY(1.08);transform-origin:0 12px;left:267.00px;width:300px;text-align:right;">5.000</div><div class="c" style="top:239.00px;font-size:13.33px;line-height:15px;height:15px;transform:scaleY(1.08);transform-origin:0 12px;left:351.50px;width:300px;text-align:right;">650</div><div class="c" style="top:257.00px;font-size:13.33px;line-height:15px;height:15px;transform:scaleY(1.08);transform-origin:0 12px;font-weight:bold;left:97.50px;width:300px;text-align:right;">Total Non-Operating Income</div><div class="c" style="top:257.00px;font-size:13.33px;line-height:15px;height:15px;transform:scaleY(1.08);transform-origin:0 12px;font-weight:bold;left:179.50px;width:300px;text-align:right;">20.077</div><div class="c" style="top:257.00px;font-size:13.33px;line-height:15px;height:15px;transform:scaleY(1.08);transform-origin:0 12px;font-weight:bold;left:267.00px;width:300px;text-align:right;">18.700</div><div class="c" style="top:257.00px;font-size:13.33px;line-height:15px;height:15px;transform:scaleY(1.08);transform-origin:0 12px;font-weight:bold;left:351.50px;width:300px;text-align:right;">1.377</div><div class="c" style="top:293.00px;font-size:16px;line-height:18px;height:18px;font-weight:bold;left:176.30px;">Gesamteinnahmen</div><div class="c" style="top:293.00px;font-size:16px;line-height:18px;height:18px;font-weight:bold;left:179.50px;width:300px;text-align:right;">1.126.920</div><div class="c" style="top:293.00px;font-size:16px;line-height:18px;height:18px;font-weight:bold;left:267.00px;width:300px;text-align:right;">1.112.650</div><div class="c" style="top:293.00px;font-size:16px;line-height:18px;height:18px;font-weight:bold;left:351.50px;width:300px;text-align:right;">14.270</div><div class="c" style="top:332.00px;font-size:16px;line-height:18px;height:18px;font-weight:bold;color:#fff;left:176.30px;">AUFWENDUNGEN</div><div class="c" style="top:353.00px;font-size:13.33px;line-height:15px;height:15px;transform:scaleY(1.08);transform-origin:0 12px;font-weight:bold;left:163.80px;">Betriebsausgaben</div><div class="c" style="top:372.00px;font-size:13.33px;line-height:15px;height:15px;transform:scaleY(1.08);transform-origin:0 12px;left:163.80px;">Buchhaltung und Recht</div><div class="c" style="top:372.00px;font-size:13.33px;line-height:15px;height:15px;transform:scaleY(1.08);transform-origin:0 12px;left:179.50px;width:300px;text-align:right;">2.342</div><div class="c" style="top:372.00px;font-size:13.33px;line-height:15px;height:15px;transform:scaleY(1.08);transform-origin:0 12px;left:267.00px;width:300px;text-align:right;">2.500</div><div class="c" style="top:372.00px;font-size:13.33px;line-height:15px;height:15px;transform:scaleY(1.08);transform-origin:0 12px;left:357.00px;width:300px;text-align:right;">(158)</div><div class="c" style="top:392.00px;font-size:13.33px;line-height:15px;height:15px;transform:scaleY(1.08);transform-origin:0 12px;left:163.80px;">Werbung</div><div class="c" style="top:392.00px;font-size:13.33px;line-height:15px;height:15px;transform:scaleY(1.08);transform-origin:0 12px;left:179.50px;width:300px;text-align:right;">3.567</div><div class="c" style="top:392.00px;font-size:13.33px;line-height:15px;height:15px;transform:scaleY(1.08);transform-origin:0 12px;left:267.00px;width:300px;text-align:right;">3.850</div><div class="c" style="top:392.00px;font-size:13.33px;line-height:15px;height:15px;transform:scaleY(1.08);transform-origin:0 12px;left:357.00px;width:300px;text-align:right;">(283)</div><div class="c" style="top:410.00px;font-size:13.33px;line-height:15px;height:15px;transform:scaleY(1.08);transform-origin:0 12px;left:163.80px;">Abschreibung</div><div class="c" style="top:410.00px;font-size:13.33px;line-height:15px;height:15px;transform:scaleY(1.08);transform-origin:0 12px;left:179.50px;width:300px;text-align:right;">22.786</div><div class="c" style="top:410.00px;font-size:13.33px;line-height:15px;height:15px;transform:scaleY(1.08);transform-origin:0 12px;left:267.00px;width:300px;text-align:right;">23.000</div><div class="c" style="top:410.00px;font-size:13.33px;line-height:15px;height:15px;transform:scaleY(1.08);transform-origin:0 12px;left:357.00px;width:300px;text-align:right;">(214)</div><div class="c" style="top:428.00px;font-size:13.33px;line-height:15px;height:15px;transform:scaleY(1.08);transform-origin:0 12px;left:163.80px;">Beiträge und Abonnements</div><div class="c" style="top:428.00px;font-size:13.33px;line-height:15px;height:15px;transform:scaleY(1.08);transform-origin:0 12px;left:179.50px;width:300px;text-align:right;">1.298</div><div class="c" style="top:428.00px;font-size:13.33px;line-height:15px;height:15px;transform:scaleY(1.08);transform-origin:0 12px;left:267.00px;width:300px;text-align:right;">1.500</div><div class="c" style="top:428.00px;font-size:13.33px;line-height:15px;height:15px;transform:scaleY(1.08);transform-origin:0 12px;left:357.00px;width:300px;text-align:right;">(202)</div><div class="c" style="top:446.00px;font-size:13.33px;line-height:15px;height:15px;transform:scaleY(1.08);transform-origin:0 12px;left:163.80px;">Versicherungen</div><div class="c" style="top:446.00px;font-size:13.33px;line-height:15px;height:15px;transform:scaleY(1.08);transform-origin:0 12px;left:179.50px;width:300px;text-align:right;">2.398</div><div class="c" style="top:446.00px;font-size:13.33px;line-height:15px;height:15px;transform:scaleY(1.08);transform-origin:0 12px;left:267.00px;width:300px;text-align:right;">2.400</div><div class="c" style="top:446.00px;font-size:13.33px;line-height:15px;height:15px;transform:scaleY(1.08);transform-origin:0 12px;left:357.00px;width:300px;text-align:right;">(2)</div><div class="c" style="top:464.00px;font-size:13.33px;line-height:15px;height:15px;transform:scaleY(1.08);transform-origin:0 12px;left:163.80px;">Zinsaufwand</div><div class="c" style="top:464.00px;font-size:13.33px;line-height:15px;height:15px;transform:scaleY(1.08);transform-origin:0 12px;left:179.50px;width:300px;text-align:right;">1.365</div><div class="c" style="top:464.00px;font-size:13.33px;line-height:15px;height:15px;transform:scaleY(1.08);transform-origin:0 12px;left:267.00px;width:300px;text-align:right;">1.400</div><div class="c" style="top:464.00px;font-size:13.33px;line-height:15px;height:15px;transform:scaleY(1.08);transform-origin:0 12px;left:357.00px;width:300px;text-align:right;">(35)</div><div class="c" style="top:482.00px;font-size:13.33px;line-height:15px;height:15px;transform:scaleY(1.08);transform-origin:0 12px;left:163.80px;">Wartung und Reparaturen</div><div class="c" style="top:482.00px;font-size:13.33px;line-height:15px;height:15px;transform:scaleY(1.08);transform-origin:0 12px;left:179.50px;width:300px;text-align:right;">672</div><div class="c" style="top:482.00px;font-size:13.33px;line-height:15px;height:15px;transform:scaleY(1.08);transform-origin:0 12px;left:267.00px;width:300px;text-align:right;">900</div><div class="c" style="top:482.00px;font-size:13.33px;line-height:15px;height:15px;transform:scaleY(1.08);transform-origin:0 12px;left:357.00px;width:300px;text-align:right;">(228)</div><div class="c" style="top:500.00px;font-size:13.33px;line-height:15px;height:15px;transform:scaleY(1.08);transform-origin:0 12px;left:163.80px;">Bürobedarf</div><div class="c" style="top:500.00px;font-size:13.33px;line-height:15px;height:15px;transform:scaleY(1.08);transform-origin:0 12px;left:179.50px;width:300px;text-align:right;">876</div><div class="c" style="top:500.00px;font-size:13.33px;line-height:15px;height:15px;transform:scaleY(1.08);transform-origin:0 12px;left:267.00px;width:300px;text-align:right;">1.200</div><div class="c" style="top:500.00px;font-size:13.33px;line-height:15px;height:15px;transform:scaleY(1.08);transform-origin:0 12px;left:357.00px;width:300px;text-align:right;">(324)</div><div class="c" style="top:518.00px;font-size:13.33px;line-height:15px;height:15px;transform:scaleY(1.08);transform-origin:0 12px;left:163.80px;">Lohn- und Gehaltskosten</div><div class="c" style="top:518.00px;font-size:13.33px;line-height:15px;height:15px;transform:scaleY(1.08);transform-origin:0 12px;left:179.50px;width:300px;text-align:right;">7.896</div><div class="c" style="top:518.00px;font-size:13.33px;line-height:15px;height:15px;transform:scaleY(1.08);transform-origin:0 12px;left:267.00px;width:300px;text-align:right;">8.000</div><div class="c" style="top:518.00px;font-size:13.33px;line-height:15px;height:15px;transform:scaleY(1.08);transform-origin:0 12px;left:357.00px;width:300px;text-align:right;">(104)</div><div class="c" style="top:536.00px;font-size:13.33px;line-height:15px;height:15px;transform:scaleY(1.08);transform-origin:0 12px;left:163.80px;">Porto</div><div class="c" style="top:536.00px;font-size:13.33px;line-height:15px;height:15px;transform:scaleY(1.08);transform-origin:0 12px;left:179.50px;width:300px;text-align:right;">125</div><div class="c" style="top:536.00px;font-size:13.33px;line-height:15px;height:15px;transform:scaleY(1.08);transform-origin:0 12px;left:267.00px;width:300px;text-align:right;">150</div><div class="c" style="top:536.00px;font-size:13.33px;line-height:15px;height:15px;transform:scaleY(1.08);transform-origin:0 12px;left:357.00px;width:300px;text-align:right;">(25)</div>
<svg class="a" style="left:660px;top:0" width="605" height="541" viewBox="660 209 605 541" font-family="Liberation Sans,sans-serif" shape-rendering="crispEdges">
<rect x="674.5" y="254.5" width="570" height="119" fill="none" stroke="#9a9a9a" stroke-width="1"/><rect x="818" y="274" width="1" height="96" fill="#858585"/><rect x="885" y="274" width="1" height="96" fill="#858585"/><rect x="951" y="274" width="1" height="96" fill="#858585"/><rect x="1018" y="274" width="1" height="96" fill="#858585"/><rect x="1085" y="274" width="1" height="96" fill="#858585"/><rect x="1152" y="274" width="1" height="96" fill="#858585"/><rect x="751" y="273" width="1" height="97" fill="#858585"/><rect x="748" y="366" width="405" height="1" fill="#858585"/><rect x="748" y="273" width="8" height="1" fill="#858585"/><rect x="748" y="297" width="8" height="1" fill="#858585"/><rect x="748" y="320" width="8" height="1" fill="#858585"/><rect x="748" y="343" width="8" height="1" fill="#858585"/><rect x="752" y="277.5" width="113" height="8.5" fill="#dc4f24"/><rect x="752" y="285.5" width="116" height="8.5" fill="#0000ff"/><rect x="752" y="300" width="73" height="9" fill="#dc4f24"/><rect x="752" y="308.5" width="74" height="8.5" fill="#0000ff"/><rect x="752" y="323" width="169" height="9" fill="#dc4f24"/><rect x="752" y="331.5" width="170" height="8.5" fill="#0000ff"/><rect x="752" y="347" width="375" height="8.5" fill="#dc4f24"/><rect x="752" y="355" width="380" height="8" fill="#0000ff"/><g font-size="13.33" fill="#111" text-anchor="middle" shape-rendering="auto"><text x="737.5" y="291">4</text><text x="737.5" y="313">3</text><text x="737.5" y="336">2</text><text x="737.5" y="361">1</text></g><rect x="1175" y="310" width="9" height="9" fill="#dc4f24"/><rect x="1175" y="335" width="9" height="9" fill="#0000ff"/><g font-size="12" fill="#111" shape-rendering="auto"><text x="1186" y="318.5">Budget</text><text x="1186" y="343">Aktuell</text></g>
<rect x="674.5" y="395.5" width="570" height="122" fill="none" stroke="#9a9a9a" stroke-width="1"/><rect x="808" y="415" width="1" height="98" fill="#858585"/><rect x="865" y="415" width="1" height="98" fill="#858585"/><rect x="923" y="415" width="1" height="98" fill="#858585"/><rect x="980" y="415" width="1" height="98" fill="#858585"/><rect x="1037" y="415" width="1" height="98" fill="#858585"/><rect x="1095" y="415" width="1" height="98" fill="#858585"/><rect x="1152" y="415" width="1" height="98" fill="#858585"/><rect x="751" y="414" width="1" height="99" fill="#858585"/><rect x="748" y="509" width="405" height="1" fill="#858585"/><rect x="748" y="414" width="8" height="1" fill="#858585"/><rect x="748" y="438" width="8" height="1" fill="#858585"/><rect x="748" y="462" width="8" height="1" fill="#858585"/><rect x="748" y="486" width="8" height="1" fill="#858585"/><rect x="752" y="418" width="286" height="9" fill="#cccc33"/><rect x="752" y="426.5" width="324" height="8.5" fill="#de1f5a"/><rect x="752" y="442" width="114" height="9" fill="#cccc33"/><rect x="752" y="450.5" width="143" height="8.5" fill="#de1f5a"/><rect x="752" y="466" width="286" height="9" fill="#cccc33"/><rect x="752" y="474.5" width="296" height="8.5" fill="#de1f5a"/><rect x="752" y="490" width="384" height="8" fill="#cccc33"/><rect x="752" y="497.5" width="388" height="8.5" fill="#de1f5a"/><g font-size="13.33" fill="#111" text-anchor="middle" shape-rendering="auto"><text x="737.5" y="432">4</text><text x="737.5" y="456">3</text><text x="737.5" y="480">2</text><text x="737.5" y="504">1</text></g><rect x="1175" y="453" width="9" height="9" fill="#cccc33"/><rect x="1175" y="478" width="9" height="9" fill="#de1f5a"/><g font-size="12" fill="#111" shape-rendering="auto"><text x="1186" y="461">Budget</text><text x="1186" y="486">Aktuell</text></g>
<rect x="678.5" y="583.5" width="569" height="197" fill="none" stroke="#9a9a9a" stroke-width="1"/><g shape-rendering="auto"><path d="M984.5 659 C1040 666 1098 700 1126 756 L973.5 756 Z" fill="#8e9e36"/><path d="M965.5 617 V640 L952 756 H949 Z" fill="#d2472c"/><path d="M858.75 640 V663.75 L929.5 756 H950 Z" fill="#6e1100"/><path d="M858.75 640 C885 624 925 615 965.5 617 L949.5 756 L946 751.5 Z" fill="#fc6749"/><path d="M780.5 690 V712.5 L867 756 H921 Z" fill="#02274a"/><path d="M780.5 690 C793 672 810 656 831.25 644.5 L917 756 H921 Z" fill="#a190a3"/><path d="M774.5 709.5 L780.5 712.5 L867 756 H753 C757 738 764 722 774.5 709.5 Z" fill="#4292cc"/></g><g font-size="13.33" fill="#111" shape-rendering="auto"><text x="894" y="610">11%</text><text x="770" y="656">7%</text><text x="726" y="744">7%</text></g>
</svg>


</div>
<div class="a" style="left:0;top:750px;width:630px;height:1px;background:#000"></div><div class="a" style="left:630px;top:750px;width:650px;height:1px;background:#a8a8a8"></div><div class="a" style="left:0;top:771px;width:1280px;height:1px;background:#c9c9c9"></div><div class="a" style="left:0;top:798px;width:1280px;height:2px;background:#c6c6c6"></div>
<div class="a" style="left:89px;top:750px;width:80px;height:20px;background:#fff;border:1px solid #000;border-top:none;border-bottom-width:2px"></div><div class="a" style="left:21px;top:751px;width:1px;height:20px;background:#a6a6a6"></div><div class="a" style="left:43px;top:751px;width:1px;height:20px;background:#a6a6a6"></div><div class="a" style="left:65px;top:751px;width:1px;height:20px;background:#a6a6a6"></div><div class="a" style="left:87px;top:751px;width:1px;height:20px;background:#a6a6a6"></div><div class="a" style="left:245px;top:754px;width:1px;height:14px;background:#b0b0b0"></div><div class="a" style="left:632px;top:751px;width:1px;height:20px;background:#a6a6a6"></div><div class="a" style="left:576px;top:776px;width:1px;height:18px;background:#d2d2d2"></div><div class="a" style="left:1012px;top:777px;width:1px;height:17px;background:#c2c2c2"></div>
<div class="ui" style="left:92.40px;top:754.00px;font-size:12px;color:#111;letter-spacing:-0.445px;font-weight:bold;">«Budgetplan»</div><div class="ui" style="left:175.10px;top:754.00px;font-size:12px;color:#222;letter-spacing:-0.200px;">Pivot-Tabelle</div><div class="ui" style="left:976.40px;top:778.00px;font-size:12px;color:#222;letter-spacing:-0.536px;">EINF</div><div class="ui" style="left:1019.40px;top:778.00px;font-size:12px;color:#222;letter-spacing:-0.281px;">AUTO</div><div class="ui" style="left:1221.70px;top:778.00px;font-size:12px;color:#222;letter-spacing:-0.476px;">100%</div>
<svg class="a" style="left:0;top:745px" width="1280" height="55" viewBox="0 745 1280 55" fill="none">
<g fill="#111"><rect x="4" y="757" width="1.600" height="8.500"/><path d="M5.500 761.200l4.500-4v8z"/><rect x="9" y="760.400" width="4.500" height="1.700"/><path d="M27 761.200l4.500-4v8z"/><rect x="30.500" y="760.400" width="4.500" height="1.700"/><path d="M57.500 761.200l-4.500-4v8z"/><rect x="49.500" y="760.400" width="4.500" height="1.700"/><rect x="78.500" y="757" width="1.600" height="8.500"/><path d="M78.500 761.200l-4.500-4v8z"/><rect x="70.500" y="760.400" width="4.500" height="1.700"/></g>
<path d="M251.500 754.500h14v11h-14zM256.200 754.500v11M260.900 754.500v11M251.500 758.200h14M251.500 761.900h14" stroke="#8a8a8a"/><path d="M251.500 767.500h8" stroke="#8a8a8a"/><path d="M259 767.500h3" stroke="#2f7fc1"/><path d="M265 762v8M261 766h8" stroke="#ffc20e" stroke-width="2.200"/>
<path d="M645.500 757l-4 4l4 4" stroke="#444" stroke-width="1.600"/><rect x="650" y="754" width="247" height="15" fill="#c6c6c6"/><path d="M1250.500 757l4 4l-4 4" stroke="#444" stroke-width="1.600"/>
<g transform="translate(0 -2.5)"><g stroke="#c6c6c6" stroke-width="2.200"><path d="M947.500 786.500a6 6 0 0 1 10-4.500"/><path d="M960.500 788.500a6 6 0 0 1-10 4.500"/></g><path d="M955 779.500v6.500h6.500z" fill="#c6c6c6"/><path d="M953 795.500v-6.500h-6.500z" fill="#c6c6c6"/></g><path d="M1066 784.500h8" stroke="#555"/><path d="M1081 784.500h110" stroke="#d0d0d0"/><path d="M1197 784.500h8M1201 780.500v8" stroke="#555"/><circle cx="1134.500" cy="784.500" r="4.300" fill="#fff" stroke="#666" stroke-width="1.100"/><path d="M1134.500 778v2.200M1134.500 789v2.200" stroke="#bbb"/><path d="M1260 778l2.300 2.200l-2.300 2.200M1263.300 778l2.300 2.200l-2.300 2.200" stroke="#555" stroke-width=".9"/>
</svg>
<div class="a" style="left:1266px;top:222px;width:14px;height:163px;background:#c6c6c6"></div>
<svg class="a" style="left:1265px;top:209px" width="15" height="563" viewBox="1265 209 15 563" fill="none"><path d="M1269.700 217.500l3.800-3.800l3.800 3.800" stroke="#444" stroke-width="1.600"/><path d="M1269.700 706l3.800 3.800l3.800-3.800" stroke="#444" stroke-width="1.600"/><rect x="1266.500" y="715.500" width="13" height="12" stroke="#dcdcdc"/><rect x="1266.500" y="743.500" width="13" height="12" stroke="#dcdcdc"/><g fill="#111"><path d="M1273 717l3 3h-6zM1273 720.500l3.500 3.500h-7z"/><rect x="1269.500" y="724.500" width="7" height="1.200"/><path d="M1273 753.500l3-3h-6zM1273 750l3.500-3.500h-7z"/><rect x="1269.500" y="744.800" width="7" height="1.200"/></g><circle cx="1273" cy="734.800" r="2.600" fill="#e0107a"/><circle cx="1273.600" cy="734.200" r="1.200" fill="#ff3090"/><path d="M1267.500 757v14M1266 758.500h13" stroke="#555"/><path d="M1270.500 761.500l6 6M1270.500 761.500v4.500M1270.500 761.500h4.500" stroke="#444" stroke-width="1.300"/></svg>

</body></html>
